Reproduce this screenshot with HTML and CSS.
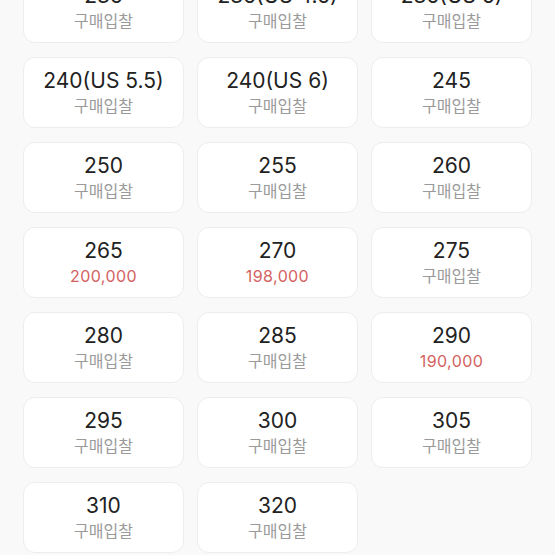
FILE: index.html
```html
<!DOCTYPE html>
<html lang="ko">
<head>
    <meta charset="UTF-8">
    <meta name="viewport" content="width=device-width, initial-scale=1.0">
    <title>사이즈 선택</title>
    <link rel="stylesheet" href="styles.css">
</head>
<body>
    <div class="size-grid">
        <div class="size-item"><div class="size">235</div><div class="bid">구매입찰</div></div>
        <div class="size-item"><div class="size">235(US 4.5)</div><div class="bid">구매입찰</div></div>
        <div class="size-item"><div class="size">235(US 5)</div><div class="bid">구매입찰</div></div>

        <div class="size-item"><div class="size">240(US 5.5)</div><div class="bid">구매입찰</div></div>
        <div class="size-item"><div class="size">240(US 6)</div><div class="bid">구매입찰</div></div>
        <div class="size-item"><div class="size">245</div><div class="bid">구매입찰</div></div>

        <div class="size-item"><div class="size">250</div><div class="bid">구매입찰</div></div>
        <div class="size-item"><div class="size">255</div><div class="bid">구매입찰</div></div>
        <div class="size-item"><div class="size">260</div><div class="bid">구매입찰</div></div>

        <div class="size-item"><div class="size">265</div><div class="bid price">200,000</div></div>
        <div class="size-item"><div class="size">270</div><div class="bid price">198,000</div></div>
        <div class="size-item"><div class="size">275</div><div class="bid">구매입찰</div></div>

        <div class="size-item"><div class="size">280</div><div class="bid">구매입찰</div></div>
        <div class="size-item"><div class="size">285</div><div class="bid">구매입찰</div></div>
        <div class="size-item"><div class="size">290</div><div class="bid price">190,000</div></div>

        <div class="size-item"><div class="size">295</div><div class="bid">구매입찰</div></div>
        <div class="size-item"><div class="size">300</div><div class="bid">구매입찰</div></div>
        <div class="size-item"><div class="size">305</div><div class="bid">구매입찰</div></div>

        <div class="size-item"><div class="size">310</div><div class="bid">구매입찰</div></div>
        <div class="size-item"><div class="size">320</div><div class="bid">구매입찰</div></div>
    </div>
</body>
</html>
```

FILE: styles.css
```css
body {
    margin: 0;
    background-color: #f9f9f9;
    font-family: Inter, "Noto Sans CJK KR", sans-serif;
    overflow: hidden;
}

.size-grid {
    display: grid;
    grid-template-columns: repeat(3, 161px);
    grid-auto-rows: 71px;
    column-gap: 13px;
    row-gap: 14px;
    padding-left: 23px;
    margin-top: -28px;
}

.size-item {
    box-sizing: border-box;
    background-color: #fff;
    border: 1px solid #ededed;
    border-radius: 12px;
    display: flex;
    flex-direction: column;
    align-items: center;
    padding-top: 11px;
}

.size {
    font-size: 21px;
    line-height: 24px;
    color: #222;
}

.bid {
    font-size: 16px;
    line-height: 26px;
    color: #9a9a9a;
}

.price {
    letter-spacing: 0.4px;
    color: #d3625f;
}
```
